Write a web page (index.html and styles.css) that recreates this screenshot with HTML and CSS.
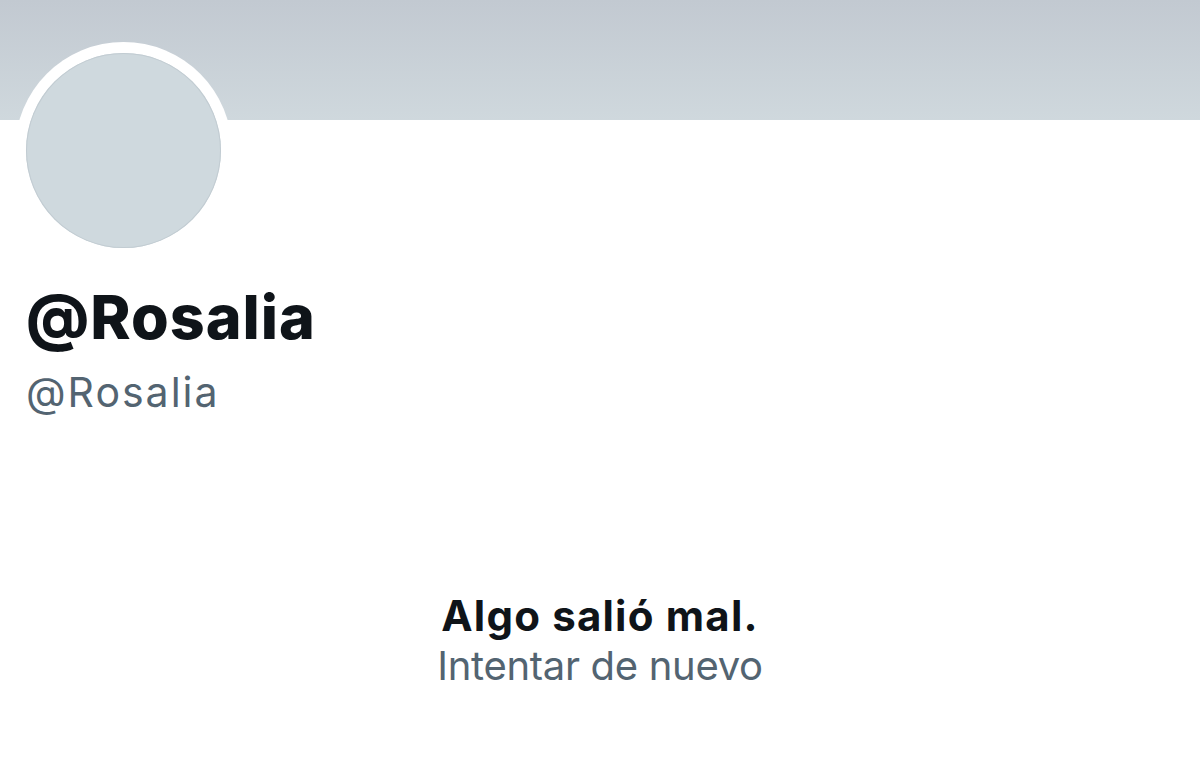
FILE: index.html
```html
<!DOCTYPE html>
<html lang="es">
<head>
  <meta charset="UTF-8">
  <meta name="viewport" content="width=device-width, initial-scale=1.0">
  <title>@Rosalia</title>
  <link rel="stylesheet" href="styles.css">
</head>
<body>
  <div class="banner"></div>
  <div class="profile">
    <div class="avatar">
      <div class="avatar-inner"></div>
    </div>
    <h1 class="name">@Rosalia</h1>
    <div class="handle">@Rosalia</div>
  </div>
  <div class="error">
    <div class="error-title">Algo salió mal.</div>
    <div class="error-retry">Intentar de nuevo</div>
  </div>
</body>
</html>
```

FILE: styles.css
```css
body {
  margin: 0;
  font-family: 'Inter', 'Noto Sans', sans-serif;
  background: #fff;
  color: #0f1419;
}

.banner {
  height: 120px;
  background: linear-gradient(to bottom, #c2c9d1, #cfd8dd);
}

.profile {
  padding: 0 26px;
}

.avatar {
  width: 217px;
  height: 217px;
  margin: -78px 0 0 -11px;
  border-radius: 50%;
  background: #fff;
  display: flex;
  align-items: center;
  justify-content: center;
}

.avatar-inner {
  width: 195px;
  height: 195px;
  border-radius: 50%;
  background: #cfd9de;
  box-shadow: inset 0 0 0 1px #c2ccd2;
}

.name {
  margin: 22px 0 0;
  font-size: 61px;
  font-weight: 800;
  line-height: 1.2;
  letter-spacing: 1px;
}

.handle {
  margin-top: 14px;
  font-size: 41px;
  line-height: 1.2;
  letter-spacing: 2px;
  color: #536471;
}

.error {
  margin-top: 174px;
  text-align: center;
}

.error-title {
  font-size: 42px;
  font-weight: 700;
  line-height: 1.2;
  letter-spacing: 1.2px;
}

.error-retry {
  font-size: 40px;
  line-height: 1.2;
  letter-spacing: -0.3px;
  color: #536471;
}
```
